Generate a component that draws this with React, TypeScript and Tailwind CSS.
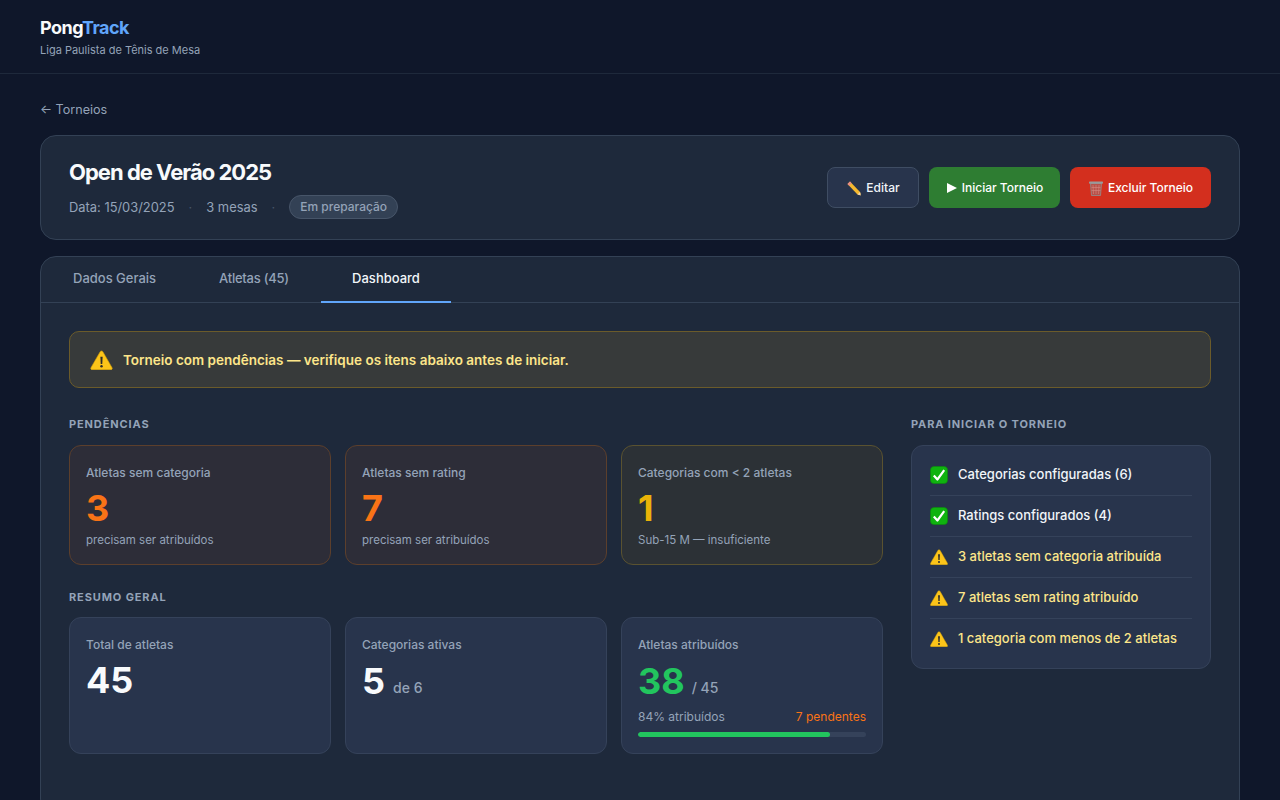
import type { ReactNode } from 'react';

const font = "font-['Inter','Liberation_Sans',sans-serif]";

function WarnIcon({ className }: { className: string }) {
    return (
        <svg viewBox="0 0 20 18" className={className}>
            <path d="M10 .8c.5 0 .9.3 1.2.7l8.3 14.4c.5.9-.1 1.9-1.1 1.9H1.600c-1 0-1.600-1-1.100-1.900L8.800 1.500c.3-.4.7-.7 1.200-.7z" fill="#fcc419" stroke="#d9a406" strokeWidth=".5" />
            <path d="M9 6h2l-.3 6.500H9.300z" fill="#2b2b2b" />
            <circle cx="10" cy="14.600" r="1.100" fill="#2b2b2b" />
        </svg>
    );
}

function CheckIcon() {
    return (
        <svg viewBox="0 0 18 18" className="h-[18px] w-[18px] shrink-0">
            <rect x=".5" y=".5" width="17" height="17" rx="3.500" fill="#0fb30f" stroke="#0a8f0a" strokeWidth=".6" />
            <path d="M3.800 9.500l3.600 4 6.800-9.300" fill="none" stroke="#fff" strokeWidth="2.200" strokeLinejoin="round" />
        </svg>
    );
}

function PencilIcon() {
    return (
        <svg viewBox="0 0 16 16" className="h-[16px] w-[16px] shrink-0">
            <path d="M4 1.500L14 12l1 3.500-3.500-1L1.500 4z" fill="#f5b82e" />
            <path d="M4 1.500L1.500 4l1.600 1.700 2.500-2.500z" fill="#e88a8a" />
            <path d="M14 12l1 3.500-3.500-1z" fill="#f3d6ae" />
            <path d="M15 15.500l-1.100-.3.800-.8z" fill="#333" />
        </svg>
    );
}

function TrashIcon() {
    return (
        <svg viewBox="0 0 16 16" className="h-[16px] w-[16px] shrink-0">
            <path d="M2.500 3.500h11l-1 12h-9z" fill="#b8524a" stroke="#8f8f8f" strokeWidth=".8" />
            <path d="M5 5l.5 9M8 5v9M11 5l-.5 9M3.500 7.500h9M3.500 10.500h9" stroke="#d98a82" strokeWidth=".6" />
            <rect x="1" y="1.500" width="14" height="2.200" rx=".8" fill="#9a9a9a" />
        </svg>
    );
}

function SectionLabel({ children }: { children: ReactNode }) {
    return (
        <p className="text-[11px] leading-[18px] font-bold tracking-[0.08em] text-[#94a3b8] uppercase">
            {children}
        </p>
    );
}

function PendingCard({
    label,
    value,
    note,
    valueClass,
    boxClass,
}: {
    label: string;
    value: string;
    note: string;
    valueClass: string;
    boxClass: string;
}) {
    return (
        <div className={`h-[120px] rounded-xl border px-4 pt-[18px] ${boxClass}`}>
            <p className="text-xs leading-[18px] font-medium text-[#94a3b8]">{label}</p>
            <p className={`mt-[8px] text-4xl leading-[36px] font-bold ${valueClass}`}>{value}</p>
            <p className="mt-[5px] text-[11.5px] leading-[18px] text-[#94a3b8]">{note}</p>
        </div>
    );
}

function SummaryCard({ label, children }: { label: string; children: ReactNode }) {
    return (
        <div className="h-[137px] rounded-xl border border-[#35425a] bg-[#28344c] px-4 pt-[18px]">
            <p className="text-xs leading-[18px] font-medium text-[#94a3b8]">{label}</p>
            {children}
        </div>
    );
}

function ChecklistRow({ ok, text, last }: { ok: boolean; text: string; last?: boolean }) {
    return (
        <li
            className={`flex h-[41px] items-center gap-[10px] border-b text-[13px] font-medium ${
                last ? 'border-transparent' : 'border-[#35425a]'
            } ${ok ? 'text-[#f1f5f9]' : 'text-[#fde68a]'}`}
        >
            {ok ? <CheckIcon /> : <WarnIcon className="h-[16px] w-[18px] shrink-0" />}
            <span>{text}</span>
        </li>
    );
}

export default function App() {
    return (
        <div className={`min-h-screen bg-[#0f172a] text-[#f1f5f9] ${font}`}>
            <header className="h-[74px] border-b border-[#1e293b] px-10 pt-[17px]">
                <p className="text-lg leading-[22px] font-bold tracking-[-0.03em] text-[#f8fafc]">
                    Pong<span className="text-[#60a5fa]">Track</span>
                </p>
                <p className="mt-[3px] text-[11px] leading-[16px] text-[#94a3b8]">
                    Liga Paulista de Tênis de Mesa
                </p>
            </header>

            <main className="px-10 pt-7">
                <a className="flex h-4 items-center text-[12.6px] text-[#94a3b8]">← Torneios</a>

                <section className="mt-[17px] flex h-[105px] items-center justify-between rounded-2xl border border-[#334155] bg-[#1e293b] px-7">
                    <div className="pt-[3px]">
                        <h1 className="text-[22px] leading-[28px] font-bold tracking-[-0.045em] text-[#f8fafc]">
                            Open de Verão 2025
                        </h1>
                        <div className="mt-[10px] flex items-center text-[12.9px] text-[#94a3b8]">
                            <span>Data: 15/03/2025</span>
                            <span className="mx-[14px] text-[#475569]">·</span>
                            <span>3 mesas</span>
                            <span className="mx-[14px] text-[#475569]">·</span>
                            <span className="flex h-6 -translate-y-px items-center rounded-full border border-[#475569] bg-[#334155] px-[10px] text-xs font-medium">
                                Em preparação
                            </span>
                        </div>
                    </div>
                    <div className="flex gap-[10px]">
                        <button className="flex h-[41px] w-[92px] items-center justify-center gap-1 rounded-lg border border-[#3f4d63] bg-[#28344c] text-xs font-medium">
                            <PencilIcon />
                            Editar
                        </button>
                        <button className="flex h-[41px] w-[131px] items-center justify-center gap-1 rounded-lg bg-[#2e7d32] text-xs font-medium text-white">
                            <svg viewBox="0 0 12 12" className="h-3 w-3 shrink-0">
                                <path d="M1 1l10 5-10 5z" fill="#fff" />
                            </svg>
                            Iniciar Torneio
                        </button>
                        <button className="flex h-[41px] w-[141px] items-center justify-center gap-1 rounded-lg bg-[#d32f1e] text-xs font-medium text-white">
                            <TrashIcon />
                            Excluir Torneio
                        </button>
                    </div>
                </section>

                <section className="mt-4 rounded-2xl border border-[#334155] bg-[#1e293b] pb-[60px]">
                    <nav className="flex h-[46px] border-b border-[#334155] text-[13px] font-medium">
                        <span className="flex items-center px-8 pb-[2px] text-[#94a3b8]">Dados Gerais</span>
                        <span className="flex w-[133px] items-center pb-[2px] pl-[31px] tracking-[-0.02em] text-[#94a3b8]">
                            Atletas (45)
                        </span>
                        <span className="-mb-px flex w-[130px] items-center border-b-2 border-[#60a5fa] pl-[31px] text-[#f1f5f9]">
                            Dashboard
                        </span>
                    </nav>

                    <div className="px-7 pt-7">
                        <div className="flex h-[57px] items-center gap-[10px] rounded-[10px] border border-[#6b5b2a] bg-[#373a3a] px-5 text-[13.5px] font-semibold text-[#fde68a]">
                            <WarnIcon className="h-[20px] w-[23px] shrink-0" />
                            <span className="pt-[2px]">
                                Torneio com pendências — verifique os itens abaixo antes de iniciar.
                            </span>
                        </div>

                        <div className="mt-[27px] grid grid-cols-[814px_300px] gap-7">
                            <div>
                                <SectionLabel>Pendências</SectionLabel>
                                <div className="mt-3 grid grid-cols-3 gap-[14px]">
                                    <PendingCard
                                        label="Atletas sem categoria"
                                        value="3"
                                        note="precisam ser atribuídos"
                                        valueClass="text-[#f97316]"
                                        boxClass="border-[#5c3f2c] bg-[#2d2d38]"
                                    />
                                    <PendingCard
                                        label="Atletas sem rating"
                                        value="7"
                                        note="precisam ser atribuídos"
                                        valueClass="text-[#f97316]"
                                        boxClass="border-[#5c3f2c] bg-[#2d2d38]"
                                    />
                                    <PendingCard
                                        label="Categorias com < 2 atletas"
                                        value="1"
                                        note="Sub-15 M — insuficiente"
                                        valueClass="text-[#eab308]"
                                        boxClass="border-[#5a5230] bg-[#2c3136]"
                                    />
                                </div>

                                <div className="mt-[23px]">
                                    <SectionLabel>Resumo geral</SectionLabel>
                                </div>
                                <div className="mt-[11px] grid grid-cols-3 gap-[14px]">
                                    <SummaryCard label="Total de atletas">
                                        <p className="mt-[8px] text-4xl leading-[36px] font-bold text-[#f8fafc]">45</p>
                                    </SummaryCard>
                                    <SummaryCard label="Categorias ativas">
                                        <p className="mt-[7px] flex items-baseline gap-2 leading-[36px]">
                                            <span className="text-4xl font-bold text-[#f8fafc]">5</span>
                                            <span className="-translate-y-px text-sm font-medium text-[#94a3b8]">de 6</span>
                                        </p>
                                    </SummaryCard>
                                    <SummaryCard label="Atletas atribuídos">
                                        <p className="mt-[7px] flex items-baseline gap-[7px] leading-[36px]">
                                            <span className="text-4xl font-bold text-[#22c55e]">38</span>
                                            <span className="-translate-y-px text-sm font-medium text-[#94a3b8]">/ 45</span>
                                        </p>
                                        <div className="mt-[7px] flex justify-between text-xs leading-[18px]">
                                            <span className="text-[#94a3b8]">84% atribuídos</span>
                                            <span className="text-[#f97316]">7 pendentes</span>
                                        </div>
                                        <div className="mt-[6px] h-[5px] overflow-hidden rounded-full bg-[#35425a]">
                                            <div className="h-full rounded-full bg-[#22c55e]" style={{ width: '84%' }} />
                                        </div>
                                    </SummaryCard>
                                </div>
                            </div>

                            <div>
                                <SectionLabel>Para iniciar o torneio</SectionLabel>
                                <ul className="mt-3 rounded-xl border border-[#35425a] bg-[#28344c] px-[18px] pt-[9px] pb-2">
                                    <ChecklistRow ok text="Categorias configuradas (6)" />
                                    <ChecklistRow ok text="Ratings configurados (4)" />
                                    <ChecklistRow ok={false} text="3 atletas sem categoria atribuída" />
                                    <ChecklistRow ok={false} text="7 atletas sem rating atribuído" />
                                    <ChecklistRow ok={false} text="1 categoria com menos de 2 atletas" last />
                                </ul>
                            </div>
                        </div>
                    </div>
                </section>
            </main>
        </div>
    );
}
